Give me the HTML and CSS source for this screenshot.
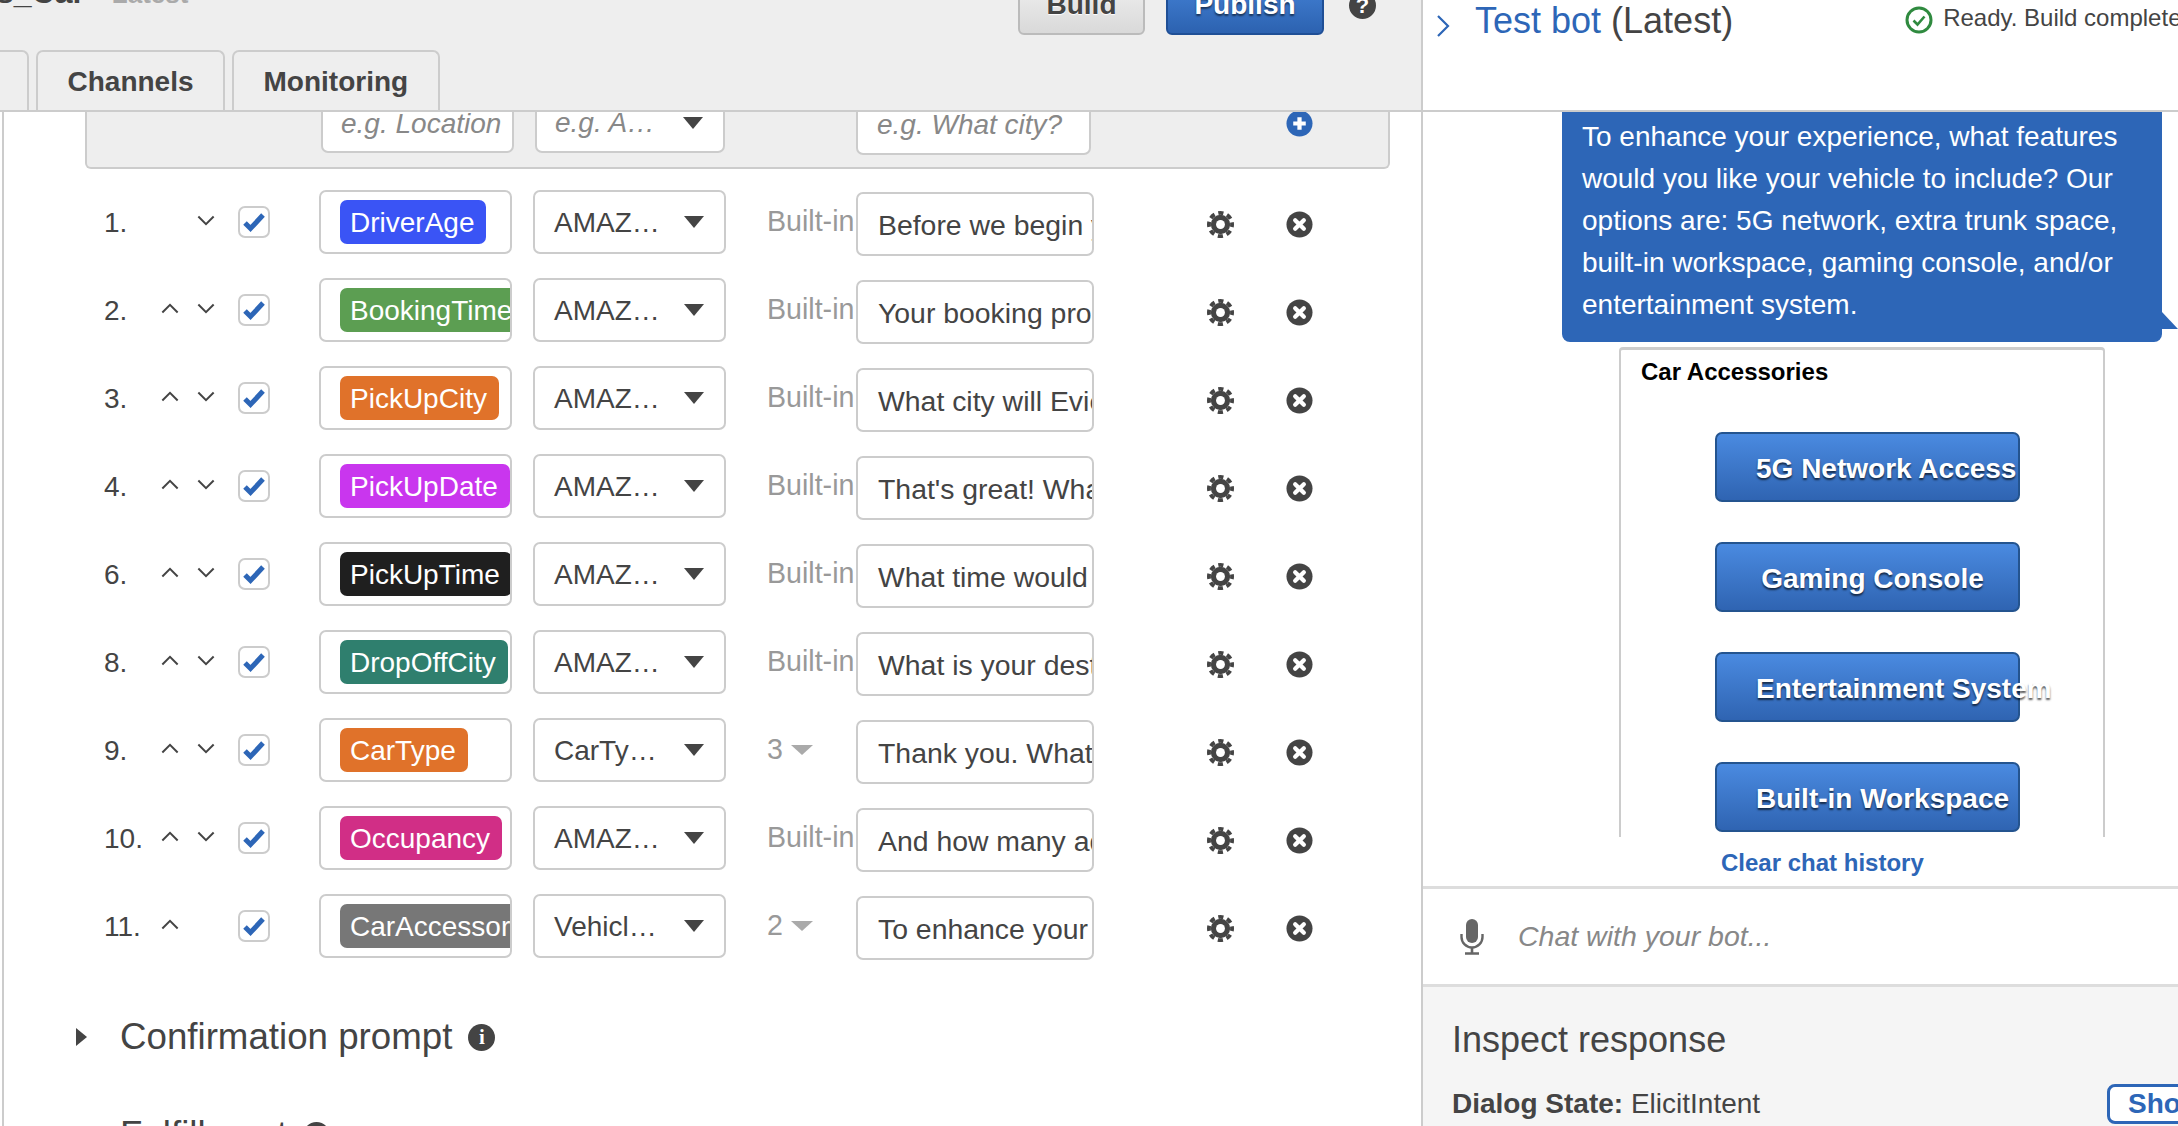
FILE: index.html
```html
<!DOCTYPE html>
<html lang="en">
<head>
<meta charset="utf-8">
<title>Lex bot editor</title>
<link rel="stylesheet" href="styles.css">
</head>
<body>
<svg class="defs" aria-hidden="true">
  <symbol id="i-gear" viewBox="0 0 28 28">
    <circle cx="14" cy="14" r="10" fill="#444"/>
    <circle cx="14" cy="14" r="12" fill="none" stroke="#444" stroke-width="4" stroke-dasharray="5.400 4.025" stroke-dashoffset="2.700"/>
    <circle cx="14" cy="14" r="4.600" fill="#fff"/>
  </symbol>
  <symbol id="i-x" viewBox="0 0 28 28">
    <circle cx="14" cy="14" r="13.500" fill="#444"/>
    <path d="M9.500 9.500l9 9M18.500 9.500l-9 9" stroke="#fff" stroke-width="4.400" stroke-linecap="round"/>
  </symbol>
  <symbol id="i-plus" viewBox="0 0 28 28">
    <circle cx="14" cy="14" r="13.500" fill="#2d66b7"/>
    <path d="M14 7.500v13M7.500 14h13" stroke="#fff" stroke-width="4.400"/>
  </symbol>
  <symbol id="i-up" viewBox="0 0 20 12"><path d="M1.500 10.500L10 2l8.500 8.500" fill="none" stroke="#444" stroke-width="2.200"/></symbol>
  <symbol id="i-down" viewBox="0 0 20 12"><path d="M1.500 1.500L10 10l8.500-8.500" fill="none" stroke="#444" stroke-width="2.200"/></symbol>
  <symbol id="i-check" viewBox="0 0 28 28"><path d="M5 15l5.500 5.500L23 7" fill="none" stroke="#2d66b7" stroke-width="5"/></symbol>
</svg>

<div class="page">
  <section class="left">
    <header class="head">
      <div class="top">
        <div class="title">s_Car <span class="version">Latest</span></div>
        <div class="actions">
          <button class="btn btn-plain">Build</button>
          <button class="btn btn-primary">Publish</button>
          <span class="help">?</span>
        </div>
      </div>
      <nav class="tabs">
        <span class="tab tab-cut"></span>
        <span class="tab">Channels</span>
        <span class="tab">Monitoring</span>
      </nav>
    </header>

    <main class="main">
      <div class="new-slot">
        <div class="field field-name placeholder">e.g. Location</div>
        <div class="field field-type placeholder">e.g. A…<i class="caret"></i></div>
        <div class="field field-prompt placeholder">e.g. What city?</div>
        <svg class="add"><use href="#i-plus"/></svg>
      </div>

      <div class="rows">
        <div class="row">
          <span class="num">1.</span><span class="move"></span>
          <svg class="move down"><use href="#i-down"/></svg>
          <span class="check"><svg><use href="#i-check"/></svg></span>
          <div class="slot"><span class="tag tag-blue">DriverAge</span></div>
          <div class="type">AMAZ…<i class="caret"></i></div>
          <div class="version-col">Built-in</div>
          <div class="prompt">Before we begin your rental</div>
          <svg class="gear"><use href="#i-gear"/></svg><svg class="remove"><use href="#i-x"/></svg>
        </div>
        <div class="row">
          <span class="num">2.</span><svg class="move"><use href="#i-up"/></svg>
          <svg class="move down"><use href="#i-down"/></svg>
          <span class="check"><svg><use href="#i-check"/></svg></span>
          <div class="slot"><span class="tag tag-green">BookingTime</span></div>
          <div class="type">AMAZ…<i class="caret"></i></div>
          <div class="version-col">Built-in</div>
          <div class="prompt">Your booking process</div>
          <svg class="gear"><use href="#i-gear"/></svg><svg class="remove"><use href="#i-x"/></svg>
        </div>
        <div class="row">
          <span class="num">3.</span><svg class="move"><use href="#i-up"/></svg>
          <svg class="move down"><use href="#i-down"/></svg>
          <span class="check"><svg><use href="#i-check"/></svg></span>
          <div class="slot"><span class="tag tag-orange">PickUpCity</span></div>
          <div class="type">AMAZ…<i class="caret"></i></div>
          <div class="version-col">Built-in</div>
          <div class="prompt">What city will Evie</div>
          <svg class="gear"><use href="#i-gear"/></svg><svg class="remove"><use href="#i-x"/></svg>
        </div>
        <div class="row">
          <span class="num">4.</span><svg class="move"><use href="#i-up"/></svg>
          <svg class="move down"><use href="#i-down"/></svg>
          <span class="check"><svg><use href="#i-check"/></svg></span>
          <div class="slot"><span class="tag tag-purple">PickUpDate</span></div>
          <div class="type">AMAZ…<i class="caret"></i></div>
          <div class="version-col">Built-in</div>
          <div class="prompt">That's great! What date</div>
          <svg class="gear"><use href="#i-gear"/></svg><svg class="remove"><use href="#i-x"/></svg>
        </div>
        <div class="row">
          <span class="num">6.</span><svg class="move"><use href="#i-up"/></svg>
          <svg class="move down"><use href="#i-down"/></svg>
          <span class="check"><svg><use href="#i-check"/></svg></span>
          <div class="slot"><span class="tag tag-black">PickUpTime</span></div>
          <div class="type">AMAZ…<i class="caret"></i></div>
          <div class="version-col">Built-in</div>
          <div class="prompt">What time would you</div>
          <svg class="gear"><use href="#i-gear"/></svg><svg class="remove"><use href="#i-x"/></svg>
        </div>
        <div class="row">
          <span class="num">8.</span><svg class="move"><use href="#i-up"/></svg>
          <svg class="move down"><use href="#i-down"/></svg>
          <span class="check"><svg><use href="#i-check"/></svg></span>
          <div class="slot"><span class="tag tag-teal">DropOffCity</span></div>
          <div class="type">AMAZ…<i class="caret"></i></div>
          <div class="version-col">Built-in</div>
          <div class="prompt">What is your destination</div>
          <svg class="gear"><use href="#i-gear"/></svg><svg class="remove"><use href="#i-x"/></svg>
        </div>
        <div class="row">
          <span class="num">9.</span><svg class="move"><use href="#i-up"/></svg>
          <svg class="move down"><use href="#i-down"/></svg>
          <span class="check"><svg><use href="#i-check"/></svg></span>
          <div class="slot"><span class="tag tag-orange">CarType</span></div>
          <div class="type">CarTy…<i class="caret"></i></div>
          <div class="version-col">3<i class="caret caret-soft"></i></div>
          <div class="prompt">Thank you. What type</div>
          <svg class="gear"><use href="#i-gear"/></svg><svg class="remove"><use href="#i-x"/></svg>
        </div>
        <div class="row">
          <span class="num">10.</span><svg class="move"><use href="#i-up"/></svg>
          <svg class="move down"><use href="#i-down"/></svg>
          <span class="check"><svg><use href="#i-check"/></svg></span>
          <div class="slot"><span class="tag tag-pink">Occupancy</span></div>
          <div class="type">AMAZ…<i class="caret"></i></div>
          <div class="version-col">Built-in</div>
          <div class="prompt">And how many adults</div>
          <svg class="gear"><use href="#i-gear"/></svg><svg class="remove"><use href="#i-x"/></svg>
        </div>
        <div class="row">
          <span class="num">11.</span><svg class="move"><use href="#i-up"/></svg>
          <span class="move down"></span>
          <span class="check"><svg><use href="#i-check"/></svg></span>
          <div class="slot"><span class="tag tag-gray">CarAccessories</span></div>
          <div class="type">Vehicl…<i class="caret"></i></div>
          <div class="version-col">2<i class="caret caret-soft"></i></div>
          <div class="prompt">To enhance your experience</div>
          <svg class="gear"><use href="#i-gear"/></svg><svg class="remove"><use href="#i-x"/></svg>
        </div>
      </div>

      <div class="section">
        <i class="disclosure"></i><span>Confirmation prompt</span>
        <span class="info">i</span>
      </div>
      <div class="section">
        <i class="disclosure"></i><span>Fulfillment</span>
        <span class="info">i</span>
      </div>
    </main>
  </section>

  <aside class="right">
    <header class="bot-head">
      <svg class="bot-chevron" viewBox="0 0 14 24"><path d="M2 2l10 10L2 22" fill="none" stroke="#2d66b7" stroke-width="2.200"/></svg>
      <div class="bot-title"><span class="link">Test bot</span> (Latest)</div>
      <div class="status">
        <svg class="status-icon" viewBox="0 0 28 28"><circle cx="14" cy="14" r="12" fill="none" stroke="#2f8a3f" stroke-width="3"/><path d="M8.500 14.500l4 4 7-8" fill="none" stroke="#2f8a3f" stroke-width="2.600"/></svg>
        <span>Ready. Build complete</span>
      </div>
    </header>

    <div class="chat">
      <div class="bubble">To enhance your experience, what features would you like your vehicle to include? Our options are: 5G network, extra trunk space, built-in workspace, gaming console, and/or entertainment system.</div>
      <div class="card">
        <div class="card-title">Car Accessories</div>
        <button class="card-btn">5G Network Access</button>
        <button class="card-btn">Gaming Console</button>
        <button class="card-btn">Entertainment System</button>
        <button class="card-btn">Built-in Workspace</button>
      </div>
    </div>

    <div class="clear"><a class="clear-link">Clear chat history</a></div>

    <div class="chat-input">
      <svg class="mic" viewBox="0 0 24 36"><rect x="6" y="0" width="12" height="24" rx="6" fill="#666"/><path d="M1.500 15v3a10.500 10.500 0 0 0 21 0v-3" fill="none" stroke="#666" stroke-width="2.400"/><path d="M12 28v6M5 34.500h14" stroke="#666" stroke-width="2.600"/></svg>
      <span class="chat-placeholder">Chat with your bot...</span>
    </div>

    <div class="inspect">
      <h2 class="inspect-title">Inspect response</h2>
      <div class="dialog-row">
        <div><b>Dialog State:</b> ElicitIntent</div>
        <button class="show">Show</button>
      </div>
    </div>
  </aside>
</div>
</body>
</html>
```
FILE: styles.css
```css
* { box-sizing: border-box; }
html, body { margin: 0; padding: 0; height: 100%; overflow: hidden; }
body { font: 28px/1.2 "Liberation Sans", Arial, sans-serif; color: #444; background: #fff; }
.defs { position: absolute; width: 0; height: 0; }
.page { display: flex; width: 2178px; height: 1126px; overflow: hidden; }

/* Left editor */
.left { width: 1421px; flex: none; display: flex; flex-direction: column; height: 100%; overflow: hidden; }
.head { height: 112px; flex: none; background: #eee; border-bottom: 2px solid #ccc; display: flex; flex-direction: column; }
.top { height: 85px; margin-top: -35px; flex: none; display: flex; align-items: flex-start; padding-right: 45px; }
.title { margin: 8px 0 0 -4px; font-size: 32px; line-height: 38px; font-weight: 700; white-space: nowrap; }
.version { margin-left: 18px; font-size: 26px; color: #aaa; }
.actions { margin-left: auto; display: flex; align-items: flex-start; }
.btn { height: 70px; padding: 10px 0 0; border-radius: 6px; font: 700 28px/1 "Liberation Sans", Arial, sans-serif; }
.btn-plain { width: 127px; border: 2px solid #bbb; color: #444; background: linear-gradient(#f6f6f6, #d9d9d9); text-shadow: 0 1px 1px #fff; }
.btn-primary { width: 158px; margin-left: 21px; border: 2px solid #1f4f96; color: #fff; background: linear-gradient(#4a8ae0, #2c62b0); text-shadow: 0 2px 2px rgba(0, 0, 0, .55); }
.help { width: 27px; height: 27px; margin: 27px 0 0 25px; border-radius: 50%; background: #444; color: #fff; font-size: 22px; line-height: 27px; font-weight: 700; text-align: center; }
.tabs { flex: 1; display: flex; gap: 7px; }
.tab { height: 61px; padding: 0 29.500px; border: 2px solid #ccc; border-bottom: 0; border-radius: 7px 7px 0 0; font-weight: 700; line-height: 60px; color: #444; }
.tab-cut { width: 49px; margin-left: -20px; padding: 0; }

.main { flex: 1; margin-left: 2px; border-left: 2px solid #ccc; min-height: 0; }
.new-slot { height: 57px; width: 1305px; margin-left: 81px; padding-bottom: 14px; display: flex; align-items: flex-end; background: #eee; border: 2px solid #ccc; border-top: 0; border-radius: 0 0 6px 6px; overflow: hidden; }
.field { flex: none; background: #fff; border: 2px solid #ccc; border-radius: 7px; padding-left: 18px; white-space: nowrap; display: flex; align-items: center; position: relative; }
.placeholder { font-style: italic; color: #888; }
.field-name { width: 193px; height: 58px; margin-left: 234px; }
.field-type { width: 190px; height: 60px; margin-left: 21px; }
.field-prompt { width: 235px; height: 60px; margin: 0 0 -2px 131px; padding-left: 19px; }
.add { width: 27px; height: 27px; margin: 0 0 16px 195px; flex: none; }

.caret { position: absolute; right: 20px; top: 50%; margin-top: -6px; width: 0; height: 0; border-left: 10px solid transparent; border-right: 10px solid transparent; border-top: 12px solid #444; }

.rows { padding-top: 9px; }
.row { height: 88px; padding-left: 100px; display: flex; align-items: center; }
.num { width: 50px; padding-top: 2px; flex: none; }
.move { width: 18px; height: 11px; margin: 0 7px 3px 7px; flex: none; display: block; }
.move.down { margin-left: 11px; margin-right: 7px; }
.check { width: 32px; height: 32px; margin: 0 0 0 16px; flex: none; border: 2px solid #ccc; border-radius: 7px; background: #fff; display: block; }
.check svg { display: block; width: 28px; height: 28px; }
.slot { width: 193px; height: 64px; margin-left: 49px; flex: none; display: flex; align-items: flex-start; padding: 8px 0 8px 19px; border: 2px solid #ccc; border-radius: 7px; overflow: hidden; background: #fff; }
.tag { flex: none; height: 44px; padding: 0 12px 0 10px; border-radius: 7px; color: #fff; line-height: 46px; white-space: nowrap; }
.tag-blue { background: #3a54f5; }
.tag-green { background: #5c9e52; }
.tag-orange { background: #e0722a; }
.tag-purple { background: #c936ee; }
.tag-black { background: #1f1f1f; }
.tag-teal { background: #2f7f6e; }
.tag-pink { background: #d12e86; }
.tag-gray { background: #777; }
.type { width: 193px; height: 64px; margin-left: 21px; flex: none; padding-left: 19px; border: 2px solid #ccc; border-radius: 7px; line-height: 62px; position: relative; white-space: nowrap; background: #fff; }
.version-col { width: 89px; margin: 0 0 2px 41px; flex: none; overflow: hidden; font-size: 28.600px; white-space: nowrap; color: #999; position: relative; }
.caret-soft { right: auto; left: 24px; margin-top: -4px; border-left-width: 11px; border-right-width: 11px; border-top: 10px solid #aaa; }
.prompt { width: 238px; height: 64px; margin-top: 4px; flex: none; padding-left: 20px; border: 2px solid #ccc; border-radius: 7px; font-size: 28.400px; line-height: 63px; overflow: hidden; white-space: nowrap; background: #fff; }
.gear { width: 27px; height: 27px; margin: 4px 0 0 113px; flex: none; }
.remove { width: 27px; height: 27px; margin: 4px 0 0 52px; flex: none; }

.section { height: 98px; padding-left: 72px; display: flex; align-items: center; font-size: 36.700px; white-space: nowrap; }
.rows + .section { margin-top: 18px; }
.disclosure { width: 0; height: 0; margin-right: 33px; border-top: 9px solid transparent; border-bottom: 9px solid transparent; border-left: 11px solid #444; }
.info { width: 27px; height: 27px; margin-left: 16px; border-radius: 50%; background: #444; color: #fff; font: 700 21px/27px "Liberation Serif", serif; text-align: center; }

/* Right test bot */
.right { flex: 1; min-width: 0; border-left: 2px solid #ccc; display: flex; flex-direction: column; height: 100%; overflow: hidden; }
.bot-head { height: 112px; flex: none; border-bottom: 2px solid #ccc; display: flex; align-items: flex-start; padding-left: 13px; }
.bot-chevron { width: 14px; height: 24px; margin-top: 14px; flex: none; }
.bot-title { margin: 1px 0 0 25px; font-size: 36px; line-height: 40px; white-space: nowrap; }
.link { color: #2d66b7; }
.status { flex: none; margin-left: 172px; margin-top: 4px; display: flex; align-items: flex-start; gap: 10px; font-size: 24px; line-height: 28px; white-space: nowrap; }
.status-icon { width: 28px; height: 28px; margin-top: 2px; flex: none; }

.chat { height: 725px; flex: none; overflow: hidden; }
.bubble { width: 600px; margin: -20px 0 0 139px; padding: 24px 15px 16px 20px; background: #2d66b7; color: #fff; font-size: 28px; line-height: 42px; border-radius: 8px; position: relative; }
.bubble::after { content: ""; position: absolute; right: -16px; bottom: 13px; border-left: 16px solid #2d66b7; border-top: 17px solid transparent; }
.card { width: 486px; height: 600px; margin: 5px 0 0 196px; border: 2px solid #ccc; border-top-width: 3px; border-bottom: 0; border-radius: 4px 4px 0 0; }
.card-title { padding-left: 20px; font-size: 24px; line-height: 44px; font-weight: 700; color: #000; margin-bottom: 38px; }
.card-btn { display: block; width: 305px; height: 70px; margin: 0 0 40px 94px; padding: 3px 29px 0 39px; border: 2px solid #24548f; border-radius: 7px; background: linear-gradient(#4a8ae0, #2f64b2); color: #fff; font: 700 28px/1 "Liberation Sans", Arial, sans-serif; text-shadow: 0 2px 2px rgba(0, 0, 0, .65); white-space: nowrap; text-align: center; }

.clear { height: 49px; flex: none; padding-left: 298px; line-height: 50px; }
.clear-link { font-size: 24px; font-weight: 700; color: #2d66b7; }
.chat-input { height: 101px; flex: none; border-top: 3px solid #ddd; border-bottom: 3px solid #ddd; display: flex; align-items: center; padding-left: 37px; }
.mic { width: 24px; height: 36px; flex: none; }
.chat-placeholder { margin-left: 34px; font-size: 28.500px; font-style: italic; color: #888; white-space: nowrap; }
.inspect { flex: 1; background: #f5f5f5; padding: 33px 0 0 29px; min-height: 0; }
.inspect-title { margin: 0 0 24px; font-size: 36px; line-height: 40px; font-weight: 400; }
.dialog-row { display: flex; align-items: center; margin-right: -49px; }
.show { width: 120px; height: 40px; margin-left: auto; padding: 0 0 0 18px; border: 3px solid #2d66b7; border-radius: 8px; background: #fff; color: #2d66b7; font: 700 28px/1 "Liberation Sans", Arial, sans-serif; text-align: left; }
```
